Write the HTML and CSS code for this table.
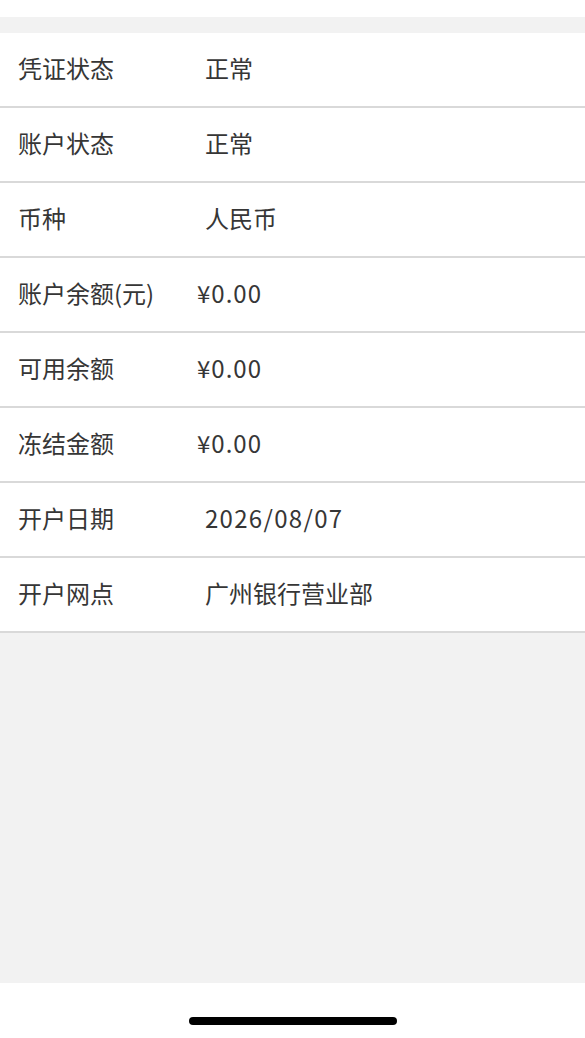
FILE: index.html
```html
<!DOCTYPE html>
<html lang="zh-CN">
<head>
<meta charset="utf-8">
<title>账户详情</title>
<link rel="stylesheet" href="styles.css">
</head>
<body>
<div class="page">
  <div class="status"></div>
  <div class="band"></div>
  <ul class="list">
    <li class="row"><span class="label">凭证状态</span><span class="value">正常</span></li>
    <li class="row"><span class="label">账户状态</span><span class="value">正常</span></li>
    <li class="row"><span class="label">币种</span><span class="value">人民币</span></li>
    <li class="row"><span class="label">账户余额(元)</span><span class="value amt">¥0.00</span></li>
    <li class="row"><span class="label">可用余额</span><span class="value amt">¥0.00</span></li>
    <li class="row"><span class="label">冻结金额</span><span class="value amt">¥0.00</span></li>
    <li class="row"><span class="label">开户日期</span><span class="value num">2026/08/07</span></li>
    <li class="row"><span class="label">开户网点</span><span class="value">广州银行营业部</span></li>
  </ul>
  <div class="fill"></div>
  <div class="home"><span class="indicator"></span></div>
</div>
</body>
</html>
```

FILE: styles.css
```css
* { box-sizing: border-box; }
html, body { margin: 0; padding: 0; }
body {
  background: #ffffff;
  font-family: "Noto Sans CJK SC", "Noto Sans", sans-serif;
  color: #363636;
}
.page {
  display: flex;
  flex-direction: column;
  height: 1038px;
}
.status { height: 17px; background: #ffffff; }
.band { height: 16px; background: #f2f2f2; }
.list {
  list-style: none;
  margin: 0;
  padding: 0;
  background: #ffffff;
}
.row {
  display: flex;
  align-items: center;
  height: 75px;
  padding-left: 18px;
  padding-bottom: 3px;
  border-bottom: 2px solid #d9d9d9;
  font-size: 24px;
  line-height: 1;
}
.label {
  width: 187px;
  flex: none;
}
.value { flex: 1; }
.value.amt { margin-left: -8px; letter-spacing: 1px; }
.value.num { letter-spacing: 1.3px; }
.fill { flex: 1; background: #f2f2f2; }
.home {
  height: 55px;
  background: #ffffff;
  display: flex;
  justify-content: center;
  padding-top: 34px;
}
.indicator {
  width: 208px;
  height: 8px;
  border-radius: 4px;
  background: #000000;
}
```
